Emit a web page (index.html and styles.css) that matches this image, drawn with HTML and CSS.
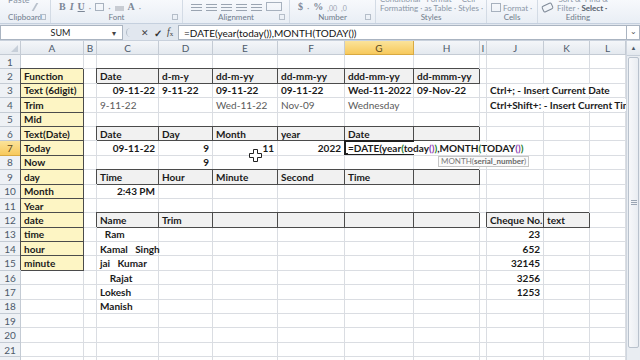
FILE: index.html
```html
<!DOCTYPE html>
<html lang="en">
  <head>
    <meta charset="UTF-8">
    <title>Book1 - Microsoft Excel</title>
    <link rel="stylesheet" href="styles.css">
  </head>
  <body>
    <div class="ribbon">
      <div class="grp g-clip">
        <div class="tools"><span class="paste">Paste</span><span class="ico brush"></span></div>
        <div class="glabel">Clipboard<span class="launch"></span></div>
      </div>
      <div class="grp g-font">
        <div class="tools"><span class="fmt">B</span><span class="fmt it">I</span><span class="fmt ul">U</span><span class="dot">&middot;</span><span class="ico box"></span><span class="dot">&middot;</span><span class="ico fill"></span><span class="fmt">A</span><span class="dot">&middot;</span></div>
        <div class="glabel">Font<span class="launch"></span></div>
      </div>
      <div class="grp g-align">
        <div class="tools"><span class="ico lines"></span><span class="ico lines"></span><span class="ico lines"></span><span class="ico lines"></span><span class="ico lines"></span><span class="ico merge"></span></div>
        <div class="glabel">Alignment<span class="launch"></span></div>
      </div>
      <div class="grp g-num">
        <div class="tools"><span class="fmt">$</span><span class="dot">&middot;</span><span class="fmt">%</span><span class="small">,00</span><span class="small">,0</span></div>
        <div class="glabel">Number<span class="launch"></span></div>
      </div>
      <div class="grp g-styles">
        <div class="tools stack"><span>Conditional&nbsp;&nbsp;&nbsp;Format&nbsp;&nbsp;&nbsp;&nbsp;&nbsp;Cell</span><span>Formatting &middot; as Table &middot; Styles &middot;</span></div>
        <div class="glabel">Styles</div>
      </div>
      <div class="grp g-cells">
        <div class="tools stack"><span>&nbsp;</span><span><span class="ico cellico"></span> Format &middot;</span></div>
        <div class="glabel">Cells</div>
      </div>
      <div class="grp g-edit">
        <div class="tools stack"><span>&nbsp;&nbsp;&nbsp;&nbsp;&nbsp;&nbsp;&nbsp;&nbsp;Sort &amp;&nbsp;&nbsp;Find &amp;</span><span><span class="ico eraser"></span>&nbsp;&nbsp;Filter &middot; <b>Select &middot;</b></span></div>
        <div class="glabel">Editing</div>
      </div>
    </div>

    <div class="fbar">
      <div class="namebox"><span class="nb-text">SUM</span><span class="nb-dd">&#9662;</span></div>
      <div class="fbtns">
        <span class="grip"></span>
        <span class="fbtn cancel">&#10005;</span>
        <span class="fbtn ok">&#10003;</span>
        <span class="fbtn fx"><i>f</i><sub>x</sub></span>
      </div>
      <div class="finput">=DATE(year(today()),MONTH(TODAY())</div>
      <div class="fexp">&#8964;</div>
    </div>

    <div class="sheet">
      <div class="grid-wrap">
        <table class="grid">
          <colgroup>
            <col class="w-rh"><col class="w-a"><col class="w-b"><col class="w-c"><col class="w-d"><col class="w-e"><col class="w-f"><col class="w-g"><col class="w-h"><col class="w-i"><col class="w-j"><col class="w-k"><col class="w-l">
          </colgroup>
          <tr class="hrow"><th class="corner"><span class="tri"></span></th><th>A</th><th>B</th><th>C</th><th>D</th><th>E</th><th>F</th><th class="sel">G</th><th>H</th><th>I</th><th>J</th><th>K</th><th>L</th></tr>
          <tr><th class="rh">1</th><td></td><td></td><td></td><td></td><td></td><td></td><td></td><td></td><td></td><td></td><td></td><td></td></tr>
          <tr><th class="rh">2</th><td class="fn">Function</td><td></td><td class="bx">Date</td><td class="bx">d-m-y</td><td class="bx">dd-m-yy</td><td class="bx">dd-mm-yy</td><td class="bx">ddd-mm-yy</td><td class="bx">dd-mmm-yy</td><td></td><td></td><td></td><td></td></tr>
          <tr><th class="rh">3</th><td class="fn">Text (6digit)</td><td></td><td class="b r">09-11-22</td><td class="b">9-11-22</td><td class="b">09-11-22</td><td class="b">09-11-22</td><td class="b">Wed-11-2022</td><td class="b">09-Nov-22</td><td></td><td class="b"><span class="over">Ctrl+; - Insert Current Date</span></td><td></td><td></td></tr>
          <tr><th class="rh">4</th><td class="fn">Trim</td><td></td><td class="n">9-11-22</td><td></td><td class="n">Wed-11-22</td><td class="n">Nov-09</td><td class="n">Wednesday</td><td></td><td></td><td class="b"><span class="over">Ctrl+Shift+: - Insert Current Time</span></td><td></td><td></td></tr>
          <tr><th class="rh">5</th><td class="fn">Mid</td><td></td><td></td><td></td><td></td><td></td><td></td><td></td><td></td><td></td><td></td><td></td></tr>
          <tr><th class="rh">6</th><td class="fn">Text(Date)</td><td></td><td class="bx">Date</td><td class="bx">Day</td><td class="bx">Month</td><td class="bx">year</td><td class="bx">Date</td><td class="bx"></td><td></td><td></td><td></td><td></td></tr>
          <tr><th class="rh sel">7</th><td class="fn">Today</td><td></td><td class="b r">09-11-22</td><td class="b r">9</td><td class="b r">11</td><td class="b r">2022</td>
            <td class="b act"><span class="act-box"></span><span class="over edit">=DATE(year<i class="p1">(</i>today<i class="p2">()</i><i class="p1">)</i>,MONTH<i class="p1">(</i>TODAY<i class="p2">()</i><i class="p1">)</i></span><span class="tip">MONTH(<b>serial_number</b>)</span></td>
            <td></td><td></td><td></td><td></td><td></td></tr>
          <tr><th class="rh">8</th><td class="fn">Now</td><td></td><td></td><td class="b r">9</td><td></td><td></td><td></td><td></td><td></td><td></td><td></td><td></td></tr>
          <tr><th class="rh">9</th><td class="fn">day</td><td></td><td class="bx">Time</td><td class="bx">Hour</td><td class="bx">Minute</td><td class="bx">Second</td><td class="bx">Time</td><td class="bx"></td><td></td><td></td><td></td><td></td></tr>
          <tr><th class="rh">10</th><td class="fn">Month</td><td></td><td class="b r">2:43 PM</td><td></td><td></td><td></td><td></td><td></td><td></td><td></td><td></td><td></td></tr>
          <tr><th class="rh">11</th><td class="fn">Year</td><td></td><td></td><td></td><td></td><td></td><td></td><td></td><td></td><td></td><td></td><td></td></tr>
          <tr><th class="rh">12</th><td class="fn">date</td><td></td><td class="bx">Name</td><td class="bx">Trim</td><td class="bx"></td><td class="bx"></td><td class="bx"></td><td class="bx"></td><td></td><td class="bx">Cheque No.</td><td class="bx">text</td><td></td></tr>
          <tr><th class="rh">13</th><td class="fn">time</td><td></td><td class="b pre">  Ram</td><td></td><td></td><td></td><td></td><td></td><td></td><td class="b r">23</td><td></td><td></td></tr>
          <tr><th class="rh">14</th><td class="fn">hour</td><td></td><td class="b pre">Kamal   Singh</td><td></td><td></td><td></td><td></td><td></td><td></td><td class="b r">652</td><td></td><td></td></tr>
          <tr><th class="rh">15</th><td class="fn">minute</td><td></td><td class="b pre">jai   Kumar</td><td></td><td></td><td></td><td></td><td></td><td></td><td class="b r">32145</td><td></td><td></td></tr>
          <tr><th class="rh">16</th><td></td><td></td><td class="b pre">    Rajat</td><td></td><td></td><td></td><td></td><td></td><td></td><td class="b r">3256</td><td></td><td></td></tr>
          <tr><th class="rh">17</th><td></td><td></td><td class="b">Lokesh</td><td></td><td></td><td></td><td></td><td></td><td></td><td class="b r">1253</td><td></td><td></td></tr>
          <tr><th class="rh">18</th><td></td><td></td><td class="b">Manish</td><td></td><td></td><td></td><td></td><td></td><td></td><td></td><td></td><td></td></tr>
          <tr><th class="rh">19</th><td></td><td></td><td></td><td></td><td></td><td></td><td></td><td></td><td></td><td></td><td></td><td></td></tr>
          <tr><th class="rh">20</th><td></td><td></td><td></td><td></td><td></td><td></td><td></td><td></td><td></td><td></td><td></td><td></td></tr>
          <tr><th class="rh">21</th><td></td><td></td><td></td><td></td><td></td><td></td><td></td><td></td><td></td><td></td><td></td><td></td></tr>
          <tr><th class="rh">22</th><td></td><td></td><td></td><td></td><td></td><td></td><td></td><td></td><td></td><td></td><td></td><td></td></tr>
        </table>
        <svg class="cursor" width="13" height="13" viewBox="0 0 13 13"><path d="M4.5 0.5h4v4h4v4h-4v4h-4v-4h-4v-4h4z" fill="#fff" stroke="#222" stroke-width="1"/></svg>
      </div>
      <div class="vscroll">
        <div class="vs-btn">&#9650;</div>
        <div class="vs-thumb"><span class="vs-grip"></span></div>
        <div class="vs-track"></div>
      </div>
    </div>
  </body>
</html>
```
FILE: styles.css
```css
html, body {
  margin: 0;
  padding: 0;
}
body {
  width: 640px;
  height: 360px;
  overflow: hidden;
  background: #fff;
  font-family: "Lato", "Open Sans", sans-serif;
  color: #222;
}

/* ribbon (only the bottom strip is visible) */
.ribbon {
  display: flex;
  height: 23px;
  background: linear-gradient(#f7f9fc, #e9eef5);
  border-bottom: 1px solid #c5d0de;
  overflow: hidden;
}
.grp {
  position: relative;
  display: flex;
  flex-direction: column;
  border-right: 1px solid #d3dbe5;
  box-sizing: border-box;
}
.g-clip { width: 51px; }
.g-font { width: 132px; }
.g-align { width: 107px; }
.g-num { width: 86px; }
.g-styles { width: 111px; }
.g-cells { width: 51px; }
.g-edit { width: 80px; border-right: none; }
.tools {
  height: 13px;
  display: flex;
  align-items: flex-end;
  gap: 4px;
  padding-left: 8px;
  overflow: hidden;
  font-size: 9px;
  color: #8a96a6;
}
.tools.stack {
  flex-direction: column;
  align-items: flex-start;
  justify-content: flex-end;
  gap: 0;
  line-height: 9px;
  font-size: 8px;
  white-space: nowrap;
  padding-left: 4px;
}
.tools.stack b { color: #555f6c; }
.paste {
  margin-top: -6px;
  align-self: flex-start;
  font-size: 9px;
}
.fmt {
  font-family: "Liberation Serif", serif;
  font-weight: bold;
  font-size: 10px;
  color: #7c8797;
  line-height: 12px;
}
.fmt.it { font-style: italic; }
.fmt.ul { text-decoration: underline; }
.dot { color: #9aa4b1; line-height: 10px; }
.small { font-size: 7px; color: #9aa4b1; line-height: 10px; }
.ico {
  display: inline-block;
  width: 9px;
  height: 8px;
  margin-bottom: 2px;
}
.brush { border-left: 2px solid #b9c1cc; transform: skewX(-30deg); width: 3px; }
.box { border: 1px solid #a7b1be; width: 7px; height: 6px; }
.fill { background: #c8ccd3; height: 5px; }
.lines {
  width: 11px;
  height: 7px;
  background: repeating-linear-gradient(#9aa4b1 0 1px, transparent 1px 3px);
}
.merge { width: 14px; height: 7px; border: 1px solid #a7b1be; }
.cellico { width: 8px; height: 7px; border: 1px solid #a7b1be; margin: 0; vertical-align: -1px; }
.eraser { width: 9px; height: 5px; border: 1px solid #7f8a98; border-radius: 2px; margin: 0; transform: rotate(-25deg); }
.glabel {
  height: 10px;
  line-height: 9px;
  font-size: 8px;
  color: #6f7b8b;
  text-align: center;
  white-space: nowrap;
}
.launch {
  position: absolute;
  right: 4px;
  bottom: 3px;
  width: 4px;
  height: 4px;
  border: 1px solid #b5bec9;
}

/* formula bar */
.fbar {
  display: flex;
  height: 17px;
  background: #e1e7ef;
  border-bottom: 1px solid #c9d1dc;
  box-sizing: border-box;
  padding-top: 1px;
}
.namebox {
  width: 123px;
  display: flex;
  align-items: center;
  background: #fff;
  border: 1px solid #aab4c1;
  box-sizing: border-box;
  font-size: 9px;
  color: #222;
}
.nb-text { flex: 1; text-align: center; padding-left: 8px; }
.nb-dd { width: 10px; font-size: 8px; color: #444; }
.fbtns {
  width: 55px;
  display: flex;
  align-items: center;
  gap: 5px;
  padding-left: 3px;
  box-sizing: border-box;
}
.grip {
  width: 5px;
  height: 9px;
  border-left: 1px solid #b2bcc8;
  border-radius: 5px 0 0 5px;
  margin-right: 4px;
}
.fbtn { font-size: 10px; color: #444; line-height: 10px; }
.fbtn.cancel { font-size: 9px; }
.fbtn.ok { color: #333; font-weight: bold; }
.fbtn.fx { font-family: "Liberation Serif", serif; font-size: 10px; }
.fbtn.fx sub { font-size: 7px; vertical-align: -1px; }
.finput {
  flex: 1;
  background: #fff;
  border: 1px solid #aab4c1;
  border-right: none;
  box-sizing: border-box;
  font-size: 10px;
  line-height: 14px;
  padding-left: 5px;
  color: #111;
  white-space: nowrap;
}
.fexp {
  width: 14px;
  background: #fff;
  border: 1px solid #aab4c1;
  box-sizing: border-box;
  font-size: 8px;
  line-height: 10px;
  text-align: center;
  color: #555;
}

/* sheet */
.sheet {
  display: flex;
  height: 319px;
  overflow: hidden;
}
.grid-wrap {
  position: relative;
  width: 626px;
  overflow: hidden;
}
.grid {
  table-layout: fixed;
  width: 626px;
  border-collapse: separate;
  border-spacing: 0;
  font-size: 10px;
}
.w-rh { width: 21px; }
.w-a { width: 63px; }
.w-b { width: 13px; }
.w-c { width: 62px; }
.w-d { width: 54px; }
.w-e { width: 65px; }
.w-f { width: 67px; }
.w-g { width: 69px; }
.w-h { width: 66px; }
.w-i { width: 7px; }
.w-j { width: 57px; }
.w-k { width: 46px; }
.w-l { width: 36px; }

.grid tr { height: 14.4px; }
.grid tr.hrow { height: 14px; }
.grid th {
  padding: 0;
  font-weight: normal;
  font-size: 10px;
  color: #4d5a6a;
  background: linear-gradient(#f4f6f9, #e4e9ef);
  border-right: 1px solid #c4cbd4;
  border-bottom: 1px solid #c4cbd4;
  line-height: 12px;
  text-align: center;
}
.grid th.rh {
  background: #eef1f5;
  text-align: center;
}
.grid th.sel {
  background: linear-gradient(#fbe39a, #f7c95c);
  color: #5b4a1e;
  border-color: #d8a941;
}
.corner { position: relative; }
.tri {
  position: absolute;
  right: 2px;
  bottom: 2px;
  border-left: 7px solid transparent;
  border-bottom: 7px solid #c7cfd9;
}
.grid td {
  padding: 0 3px 0 3px;
  border-right: 1px solid #dadde2;
  border-bottom: 1px solid #dadde2;
  white-space: nowrap;
  overflow: visible;
  line-height: 12px;
  color: #4a4a4a;
}
.grid td.b { font-weight: bold; color: #1a1a1a; }
.grid td.r { text-align: right; }
.grid td.n { color: #5a5a5a; }
.grid td.pre { white-space: pre; }
.grid td.fn,
.grid td.bx {
  font-weight: bold;
  color: #1a1a1a;
  border-right-color: #4b4b4b;
  border-bottom-color: #4b4b4b;
  box-shadow: -1px -1px 0 #4b4b4b;
}
.grid td.fn { background: #fdf5c4; }
.grid td.bx { background: #f1f1f1; }
.over { background: #fff; padding-right: 2px; }
.act { position: relative; }
.act-box {
  position: absolute;
  left: -1px;
  top: -1px;
  width: 70px;
  height: 15px;
  border: 2px solid #1f1f1f;
  box-sizing: border-box;
}
.edit {
  position: relative;
  background: #fff;
  padding: 0 3px 0 0;
}
.edit i { font-style: normal; }
.edit .p1 { color: #1b7d2b; }
.edit .p2 { color: #8b3fb2; }
.tip {
  position: absolute;
  left: 93px;
  top: 15px;
  font-size: 8px;
  line-height: 9px;
  font-weight: normal;
  color: #7a7a7a;
  background: #fbfbfb;
  border: 1px solid #c6c6c6;
  padding: 0 2px;
  z-index: 2;
}
.tip b { color: #6a6a6a; }
.cursor {
  position: absolute;
  left: 249px;
  top: 108px;
}

/* vertical scrollbar */
.vscroll {
  width: 14px;
  display: flex;
  flex-direction: column;
  background: #e9edf2;
  border-left: 1px solid #cfd6df;
  box-sizing: border-box;
}
.vs-btn {
  height: 14px;
  font-size: 6px;
  line-height: 14px;
  text-align: center;
  color: #4d5a6a;
  background: linear-gradient(#f7f9fb, #e3e8ee);
  border-bottom: 1px solid #c7cfd9;
}
.vs-thumb {
  height: 289px;
  margin: 1px 1px 0;
  display: flex;
  align-items: center;
  justify-content: center;
  background: linear-gradient(90deg, #f7f8fa, #e9edf2);
  border: 1px solid #b9c2cd;
  border-radius: 2px;
}
.vs-grip {
  width: 6px;
  height: 5px;
  background: repeating-linear-gradient(#9aa5b3 0 1px, transparent 1px 2px);
}
.vs-track { flex: 1; }
```
